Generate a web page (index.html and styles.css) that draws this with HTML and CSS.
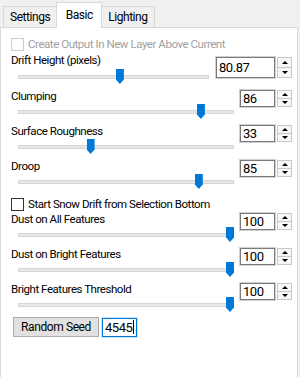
FILE: index.html
```html
<!DOCTYPE html>
<html lang="en">
<head>
    <meta charset="UTF-8">
    <title>Snow Drift</title>
    <link rel="stylesheet" href="styles.css">
</head>
<body>
    <div class="tabs">
        <div class="tab">Settings</div>
        <div class="tab active">Basic</div>
        <div class="tab">Lighting</div>
    </div>
    <div class="panel">
        <div class="check disabled"><span class="box"></span>Create Output In New Layer Above Current</div>

        <div class="field wide">
            <div class="label">Drift Height (pixels)</div>
            <div class="spin"><div class="spin-text">80.87</div><div class="spin-btns"><span class="up"></span><span class="down"></span></div></div>
            <div class="track"><div class="rail"><span class="thumb" style="left:53.5%"></span></div></div>
        </div>

        <div class="field">
            <div class="label">Clumping</div>
            <div class="spin"><div class="spin-text">86</div><div class="spin-btns"><span class="up"></span><span class="down"></span></div></div>
            <div class="track"><div class="rail"><span class="thumb" style="left:86%"></span></div></div>
        </div>

        <div class="field">
            <div class="label">Surface Roughness</div>
            <div class="spin"><div class="spin-text">33</div><div class="spin-btns"><span class="up"></span><span class="down"></span></div></div>
            <div class="track"><div class="rail"><span class="thumb" style="left:33%"></span></div></div>
        </div>

        <div class="field">
            <div class="label">Droop</div>
            <div class="spin"><div class="spin-text">85</div><div class="spin-btns"><span class="up"></span><span class="down"></span></div></div>
            <div class="track"><div class="rail"><span class="thumb" style="left:85%"></span></div></div>
        </div>

        <div class="check"><span class="box"></span>Start Snow Drift from Selection Bottom</div>

        <div class="field">
            <div class="label">Dust on All Features</div>
            <div class="spin"><div class="spin-text">100</div><div class="spin-btns"><span class="up"></span><span class="down"></span></div></div>
            <div class="track"><div class="rail"><span class="thumb" style="left:100%"></span></div></div>
        </div>

        <div class="field">
            <div class="label">Dust on Bright Features</div>
            <div class="spin"><div class="spin-text">100</div><div class="spin-btns"><span class="up"></span><span class="down"></span></div></div>
            <div class="track"><div class="rail"><span class="thumb" style="left:100%"></span></div></div>
        </div>

        <div class="field">
            <div class="label">Bright Features Threshold</div>
            <div class="spin"><div class="spin-text">100</div><div class="spin-btns"><span class="up"></span><span class="down"></span></div></div>
            <div class="track"><div class="rail"><span class="thumb" style="left:100%"></span></div></div>
        </div>

        <div class="seed">
            <button type="button" class="btn">Random Seed</button>
            <div class="seed-input">4545<span class="caret"></span></div>
        </div>
    </div>
</body>
</html>
```
FILE: styles.css
```css
body {margin: 0; background: #f0f0f0; font-family: Roboto, "Liberation Sans", sans-serif; font-size: 11.5px; letter-spacing: -0.45px; color: #000; overflow: hidden;}

.tabs {display: flex; align-items: flex-end; height: 27px; padding-left: 3px; position: relative; z-index: 1;}
.tab {line-height: 20px; padding: 0 6px; background: #f0f0f0; border: 1px solid #d9d9d9; border-bottom: 0; box-sizing: border-box; height: 21px; font-size: 12px;}
.tab + .tab {border-left: 0;}
.tab.active {background: #fff; height: 26px; line-height: 24px; margin-bottom: -1px; padding: 0 6px; border-left: 1px solid #d9d9d9; margin-left: -1px; width: 46px; text-align: center;}
.tab.active + .tab {border-left: 0;}

.panel {background: #fff; border: 1px solid #d9d9d9; border-bottom: 0; margin-right: 2px; height: 350px; box-sizing: border-box; padding: 8px 5px 0 10px;}

.check {display: flex; align-items: center; height: 16px; gap: 4px;}
.check .box {width: 11px; height: 11px; border: 1px solid #333; background: #fff; flex: none;}
.check.disabled {color: #a0a0a0;}
.check.disabled .box {border-color: #ccc;}
.panel > .check:not(.disabled) {margin-top: 6px;}

.field {display: grid; grid-template-columns: 1fr auto; grid-template-rows: 15px 16px; column-gap: 6px; margin-bottom: 4px;}
.field.wide {grid-template-rows: 17px 16px; column-gap: 7px;}
.label {grid-row: 1; grid-column: 1; line-height: 15px; white-space: nowrap;}
.wide .label {line-height: 16px;}
.spin {grid-row: 1 / 3; grid-column: 2; align-self: start; display: flex; margin-top: 1px;}
.wide .spin {margin-top: 5px;}
.spin-text {width: 31px; height: 15px; border: 1px solid #7a7a7a; box-shadow: inset 0 0 0 1px #fff, 0 0 0 1px #d0d0d0; background: #fff; font-size: 13px; line-height: 15px; padding-left: 2px;}
.wide .spin-text {width: 55px; height: 19px; line-height: 19px;}
.spin-btns {display: flex; flex-direction: column; margin-left: 2px; width: 15px;}
.spin-btns span {flex: 1; border: 1px solid #c8c8c8; background: #f7f7f7; display: flex; align-items: center; justify-content: center;}
.spin-btns span + span {border-top: 0;}
.spin-btns .up::before {content: ""; border: 3px solid transparent; border-bottom: 3px solid #000; border-top: 0;}
.spin-btns .down::before {content: ""; border: 3px solid transparent; border-top: 3px solid #000; border-bottom: 0;}

.track {grid-row: 2; grid-column: 1; margin-left: 7px; position: relative; display: flex; align-items: center;}
.track::before {content: ""; position: absolute; left: 0; right: 0; top: 6px; height: 2px; background: #e7e7e7; border: 1px solid #d6d6d6;}
.rail {position: relative; flex: 1; height: 16px; margin: 0 4px;}
.thumb {position: absolute; top: 0; width: 8px; height: 15px; margin-left: -4px; background: #0078d7; clip-path: polygon(0 0, 100% 0, 100% 70%, 50% 100%, 0 70%);}

.seed {display: flex; align-items: center; gap: 3px; margin-top: 1px; padding-left: 2px;}
.btn {width: 86px; height: 20px; background: #e1e1e1; border: 1px solid #adadad; font-family: inherit; font-size: 12px; letter-spacing: -0.4px; padding: 0; color: #000;}
.seed-input {width: 31px; height: 17px; border: 1px solid #0078d7; box-shadow: inset 0 0 0 1px #fff, 0 0 0 1px #cce4f7; font-size: 13px; line-height: 17px; padding-left: 2px; display: flex; align-items: center;}
.caret {width: 1px; height: 14px; background: #000; margin-left: 1px;}
```
